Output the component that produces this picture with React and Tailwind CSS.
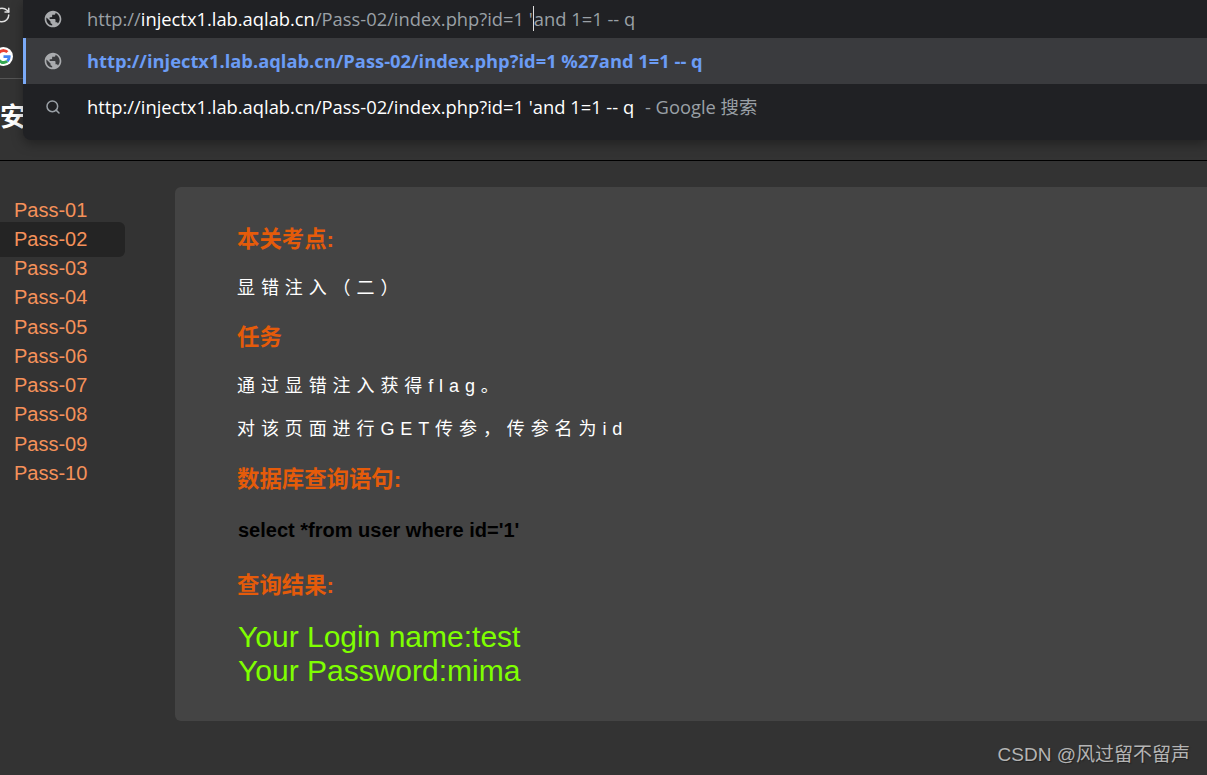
import React from "react";
import { RotateCw, Search } from "lucide-react";

const sans = "font-['Liberation_Sans','Noto_Sans_CJK_SC',sans-serif]";
const passes = ["Pass-01", "Pass-02", "Pass-03", "Pass-04", "Pass-05", "Pass-06", "Pass-07", "Pass-08", "Pass-09", "Pass-10"];

const GlobeIcon = () => (
  <svg width="20" height="20" viewBox="0 0 24 24" fill="#a9abae">
    <path d="M12 2C6.48 2 2 6.48 2 12s4.48 10 10 10 10-4.48 10-10S17.52 2 12 2zm-1 17.93c-3.95-.49-7-3.85-7-7.93 0-.62.08-1.21.21-1.79L9 15v1c0 1.1.9 2 2 2v1.93zm6.9-2.54c-.26-.81-1-1.39-1.9-1.39h-1v-3c0-.55-.45-1-1-1H8v-2h2c.55 0 1-.45 1-1V7h2c1.1 0 2-.9 2-2v-.41c2.93 1.19 5 4.06 5 7.41 0 2.08-.8 3.97-2.1 5.39z" />
  </svg>
);

const GoogleIcon = () => (
  <svg width="19" height="19" viewBox="0 0 48 48" className="rounded-full bg-white p-[2px]">
    <path fill="#EA4335" d="M24 9.5c3.5 0 6.700 1.200 9.200 3.600l6.900-6.900C35.900 2.400 30.500 0 24 0 14.600 0 6.500 5.400 2.600 13.200l8 6.200C12.500 13.700 17.800 9.500 24 9.500z" />
    <path fill="#4285F4" d="M47 24.500c0-1.600-.1-3.100-.4-4.500H24v9h12.900c-.6 3-2.200 5.500-4.700 7.200l7.700 6C44.400 38.100 47 31.800 47 24.500z" />
    <path fill="#FBBC05" d="M10.600 28.600c-.5-1.400-.8-3-.8-4.600s.3-3.200.8-4.600l-8-6.200C.9 16.500 0 20.100 0 24s.9 7.500 2.600 10.800l8-6.200z" />
    <path fill="#34A853" d="M24 48c6.500 0 11.900-2.100 15.900-5.800l-7.700-6c-2.200 1.400-4.900 2.300-8.200 2.300-6.200 0-11.500-4.200-13.400-9.900l-8 6.200C6.500 42.600 14.600 48 24 48z" />
  </svg>
);

const Heading = ({ children, className = "" }) => (
  <h2 className={`ml-[-1px] text-[22.4px] leading-[26px] font-bold text-[#e55b0a] ${className}`}>{children}</h2>
);

const Body = ({ children, className = "" }) => (
  <p className={`ml-[-1px] text-[18px] leading-[22px] tracking-[5.9px] text-white ${className}`}>{children}</p>
);

export default function App() {
  return (
    <div className={`relative h-[775px] w-[1207px] overflow-hidden bg-[#333333] ${sans}`}>
      {/* browser chrome behind the dropdown */}
      <div className="h-[161px] border-b border-black">
        <div className="flex h-[79px] w-[23px] flex-col overflow-hidden border-b border-[#555]">
          <RotateCw size={18} strokeWidth={2} className="mt-[6px] ml-[-7px] shrink-0 text-[#e0e0e0]" />
          <div className="mt-[23px] ml-[-6px] shrink-0">
            <GoogleIcon />
          </div>
        </div>
        <div className="mt-[21px] text-[26px] leading-[34px] font-bold text-white">安</div>
      </div>

      {/* omnibox dropdown */}
      <div className="absolute top-0 right-0 left-[23px] h-[140px] rounded-bl-lg bg-[#202124] text-[18.33px] shadow-[0_4px_12px_rgba(0,0,0,0.35)] font-['Open_Sans','Noto_Sans_CJK_SC',sans-serif]">
        <div className="flex h-[38px] items-center">
          <div className="ml-[-4px] flex w-[68px] justify-center"><GlobeIcon /></div>
          <span className="whitespace-pre text-[#9aa0a6]">
            http://<span className="text-white">injectx1.lab.aqlab.cn</span>/Pass-02/index.php?id=1 '<span className="border-l border-[#ddd]">and 1=1 -- q</span>
          </span>
        </div>
        <div className="flex h-[46px] items-center border-l-[3px] border-[#7baaf7] bg-[#3a3b3e]">
          <div className="ml-[-7px] flex w-[68px] justify-center"><GlobeIcon /></div>
          <span className="font-bold whitespace-pre text-[#6b9cf5]">http://injectx1.lab.aqlab.cn/Pass-02/index.php?id=1 %27and 1=1 -- q</span>
        </div>
        <div className="flex h-[46px] items-center">
          <div className="ml-[-4px] flex w-[68px] justify-center"><Search size={16} strokeWidth={2.25} className="text-[#9aa0a6]" /></div>
          <span className="whitespace-pre text-white">
            http://injectx1.lab.aqlab.cn/Pass-02/index.php?id=1 'and 1=1 -- q<span className="ml-[6px] text-[#9aa0a6]"> - Google 搜索</span>
          </span>
        </div>
      </div>

      {/* page body */}
      <div className="flex pt-[26px]">
        <ul className="w-[175px] shrink-0 pt-[8.6px] text-[20px] text-[#f5915a]">
          {passes.map((name) => (
            <li key={name} className="relative h-[29.25px] leading-[29px]">
              {name === "Pass-02" && <span className="absolute top-[-3px] left-0 h-[35px] w-[125px] rounded-r-md bg-[#242424]" />}
              <span className="relative pl-[14px]">{name}</span>
            </li>
          ))}
        </ul>
        <main className="h-[534px] flex-1 rounded-l-md bg-[#444444] pt-[40px] pl-[63px]">
          <Heading>本关考点:</Heading>
          <Body className="mt-[24px]">显错注入（二）</Body>
          <Heading className="mt-[26px]">任务</Heading>
          <Body className="mt-[24px]">通过显错注入获得flag。</Body>
          <Body className="mt-[21px]">对该页面进行GET传参，传参名为id</Body>
          <Heading className="mt-[27px]">数据库查询语句:</Heading>
          <p className="mt-[25px] text-[20px] leading-[24px] font-bold text-black">select *from user where id='1'</p>
          <Heading className="mt-[31px]">查询结果:</Heading>
          <p className="mt-[21px] text-[30px] leading-[34px] text-[#7fff00]">
            Your Login name:test
            <br />
            Your Password:mima
          </p>
        </main>
      </div>

      {/* watermark */}
      <div className="absolute right-[17px] bottom-[8px] text-[19px] leading-[24px] text-[#b4b4b4] [text-shadow:1px_1px_1px_#222]">CSDN @风过留不留声</div>
    </div>
  );
}
